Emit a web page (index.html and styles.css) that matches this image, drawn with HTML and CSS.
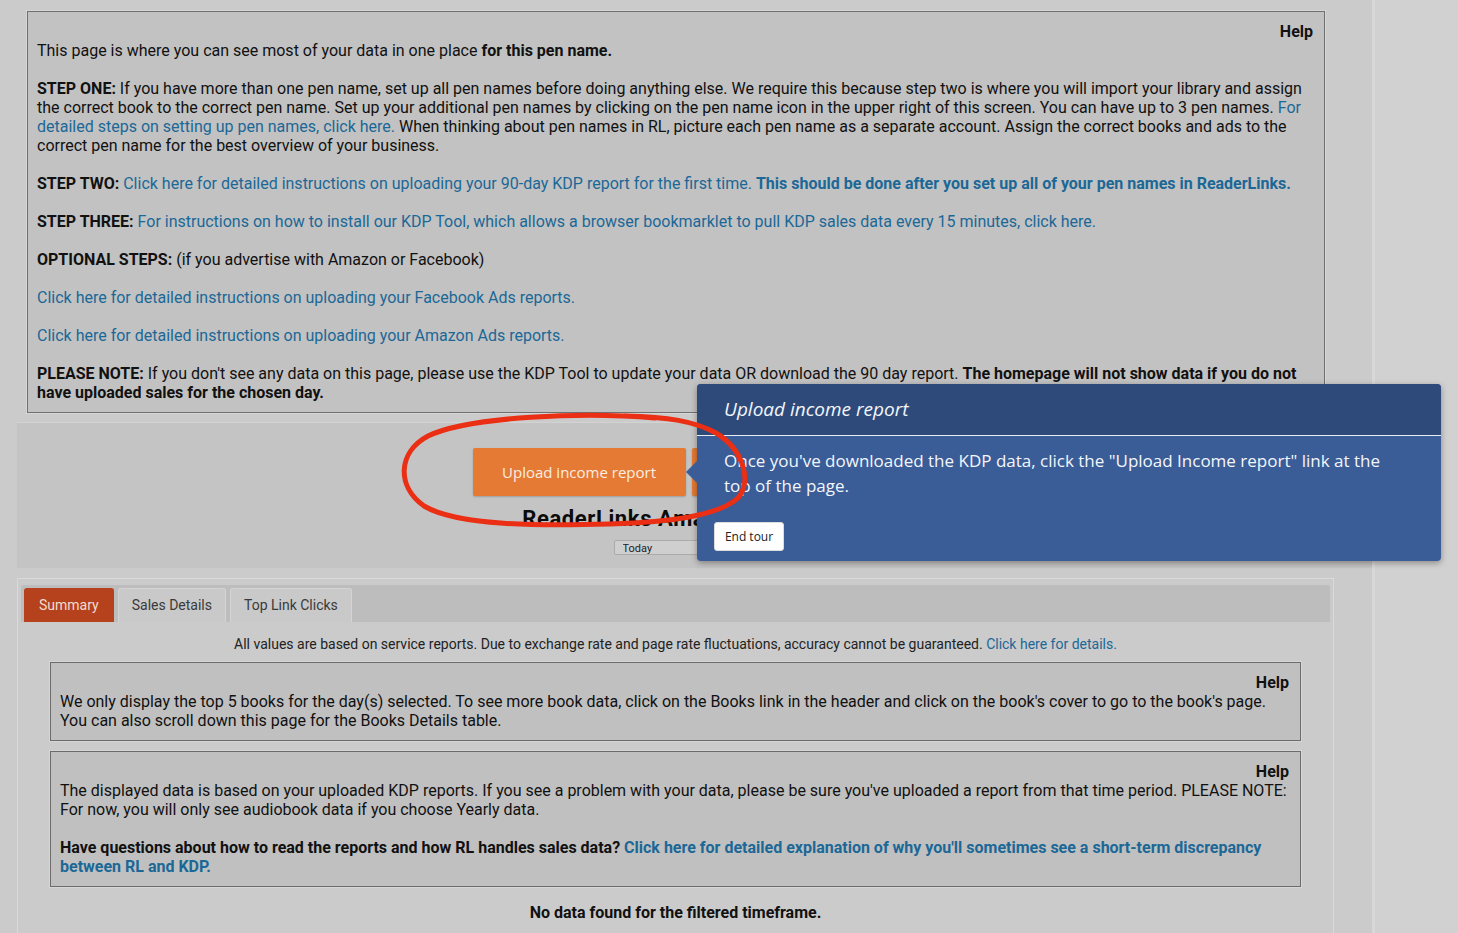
FILE: index.html
```html
<!DOCTYPE html>
<html>
<head>
    <title>ReaderLinks - Dashboard</title>
    <link rel="stylesheet" href="styles.css">
</head>
<body>
<div class="page">
    <div class="main">
        <div class="help-box top-help">
            <div class="help-label">Help</div>
            <p>This page is where you can see most of your data in one place <strong>for this pen name.</strong></p>
            <p><strong>STEP ONE:</strong> If you have more than one pen name, set up all pen names before doing anything else. We require this because step two is where you will import your library and assign the correct book to the correct pen name. Set up your additional pen names by clicking on the pen name icon in the upper right of this screen. You can have up to 3 pen names. <a href="#">For detailed steps on setting up pen names, click here.</a> When thinking about pen names in RL, picture each pen name as a separate account. Assign the correct books and ads to the correct pen name for the best overview of your business.</p>
            <p><strong>STEP TWO:</strong> <a href="#">Click here for detailed instructions on uploading your 90-day KDP report for the first time. <strong>This should be done after you set up all of your pen names in ReaderLinks.</strong></a></p>
            <p><strong>STEP THREE:</strong> <a href="#">For instructions on how to install our KDP Tool, which allows a browser bookmarklet to pull KDP sales data every 15 minutes, click here.</a></p>
            <p><strong>OPTIONAL STEPS:</strong> (if you advertise with Amazon or Facebook)</p>
            <p><a href="#">Click here for detailed instructions on uploading your Facebook Ads reports.</a></p>
            <p><a href="#">Click here for detailed instructions on uploading your Amazon Ads reports.</a></p>
            <p><strong>PLEASE NOTE:</strong> If you don't see any data on this page, please use the KDP Tool to update your data OR download the 90 day report. <strong>The homepage will not show data if you do not have uploaded sales for the chosen day.</strong></p>
        </div>

        <div class="upload-area">
            <div class="upload-buttons">
                <button class="btn-orange">Upload income report</button>
                <button class="btn-orange wide">Upload ads report</button>
            </div>
            <h2 class="dash-title">ReaderLinks Amazon Sales Stats</h2>
            <select class="range-select">
                <option>Today</option>
            </select>
        </div>

        <div class="tab-panel">
            <div class="tab-bar">
                <span class="tab active">Summary</span>
                <span class="tab">Sales Details</span>
                <span class="tab">Top Link Clicks</span>
            </div>
            <p class="notice">All values are based on service reports. Due to exchange rate and page rate fluctuations, accuracy cannot be guaranteed. <a href="#">Click here for details.</a></p>
            <div class="help-box inner-help">
                <div class="help-label">Help</div>
                <p>We only display the top 5 books for the day(s) selected. To see more book data, click on the Books link in the header and click on the book's cover to go to the book's page. You can also scroll down this page for the Books Details table.</p>
            </div>
            <div class="help-box inner-help">
                <div class="help-label">Help</div>
                <p>The displayed data is based on your uploaded KDP reports. If you see a problem with your data, please be sure you've uploaded a report from that time period. PLEASE NOTE: For now, you will only see audiobook data if you choose Yearly data.</p>
                <p><strong>Have questions about how to read the reports and how RL handles sales data? <a href="#">Click here for detailed explanation of why you'll sometimes see a short-term discrepancy between RL and KDP.</a></strong></p>
            </div>
            <p class="no-data">No data found for the filtered timeframe.</p>
        </div>
    </div>
    <div class="side"></div>

    <!-- tour popover -->
    <div class="tour">
        <div class="tour-arrow"></div>
        <div class="tour-title">Upload income report</div>
        <div class="tour-body">
            <p>Once you've downloaded the KDP data, click the "Upload Income report" link at the top of the page.</p>
            <button class="tour-end">End tour</button>
        </div>
    </div>

    <!-- hand drawn marker loop -->
    <svg class="marker" width="1458" height="933" viewBox="0 0 1458 933">
        <path d="M655 418 C585 412 470 416 428 436 C398 452 396 486 424 506 C458 526 540 526 610 524 C670 522 718 516 738 498 C752 482 744 450 716 433 C694 421 668 417 625 416" fill="none" stroke="#ea2f14" stroke-width="5" stroke-linecap="round"/>
    </svg>
</div>
</body>
</html>
```

FILE: styles.css
```css
body {
    margin: 0;
    padding: 0;
    background-color: #cbcbcb;
    font-family: 'Roboto', 'Liberation Sans', sans-serif;
    font-size: 16px;
    line-height: 19px;
    color: #111;
}
a {
    color: #1b6897;
    text-decoration: none;
}
.page {
    position: relative;
    display: flex;
    height: 933px;
    overflow: hidden;
}
.main {
    width: 1372px;
    flex: none;
}
.side {
    flex: 1;
    background-color: #d1d1d1;
    border-left: 3px solid #d8d8d8;
}

/* help boxes */
.help-box {
    background-color: #c2c2c2;
    border: 1px solid #707070;
    box-shadow: 0 0 0 1px #d6d6d6;
    padding: 10px 11px 10px 9px;
}
.help-box p {
    margin: 19px 0 0;
}
.help-box .help-label + p {
    margin-top: 0;
}
.help-label {
    text-align: right;
    font-weight: bold;
}
.top-help {
    margin: 11px 0 0 27px;
    width: 1276px;
}

/* upload */
.upload-area {
    margin: 10px 0 0 17px;
    height: 145px;
    background-color: #c4c4c4;
    box-shadow: 0 -1px 0 #d3d3d3;
    display: flex;
    flex-direction: column;
    align-items: center;
}
.upload-buttons {
    display: flex;
    gap: 6px;
    margin-top: 25px;
}
.btn-orange {
    width: 213px;
    height: 48px;
    border: none;
    border-radius: 2px;
    background-color: #e57a35;
    color: #fbeee2;
    font-family: 'Open Sans', sans-serif;
    font-size: 15px;
    box-shadow: 0 1px 2px rgba(0,0,0,0.2);
}
.btn-orange.wide {
    width: 225px;
}
.dash-title {
    margin: 11px 0 0;
    font-size: 22px;
    line-height: 24px;
    letter-spacing: 0.6px;
    font-weight: bold;
    color: #0b0b0b;
}
.range-select {
    margin-top: 9px;
    width: 162px;
    height: 15px;
    font-size: 11px;
    padding: 0 0 0 4px;
    border: 1px solid #ababab;
    border-radius: 2px;
    background-color: #cfcfcf;
    color: #222;
    font-family: 'Roboto', sans-serif;
}

/* tabs */
.tab-panel {
    margin: 10px 0 0 17px;
    width: 1309px;
    border: 1px solid #dadada;
    border-bottom: none;
    padding: 6px 3px 0;
    height: 400px;
}
.tab-bar {
    display: flex;
    gap: 4px;
    background-color: #bdbdbd;
    padding: 3px 3px 0;
    border-radius: 2px 2px 0 0;
}
.tab {
    display: block;
    padding: 7px 13px;
    font-size: 14px;
    color: #3a3a3a;
    background-color: #c9c9c9;
    border: 1px solid #d4d4d4;
    border-bottom: none;
    border-radius: 3px 3px 0 0;
}
.tab.active {
    padding: 7px 14px;
    background-color: #b5411d;
    border-color: #b5411d;
    color: #f1ddd0;
}
.notice {
    margin: 13px 0 0;
    text-align: center;
    font-size: 14px;
    color: #222;
}
.inner-help {
    margin: 8px 0 0 29px;
    width: 1229px;
    background-color: #c0c0c0;
    border-color: #6b6b6b;
}
.inner-help + .inner-help {
    margin-top: 10px;
}
.no-data {
    margin: 16px 0 0;
    text-align: center;
    font-weight: bold;
}

/* tour popover */
.tour {
    position: absolute;
    left: 697px;
    top: 384px;
    width: 744px;
    height: 177px;
    background-color: #3a5c97;
    border-radius: 4px;
    box-shadow: 0 2px 6px rgba(0,0,0,0.35);
    font-family: 'Open Sans', sans-serif;
    color: #f3f6fb;
}
.tour-arrow {
    position: absolute;
    left: -11px;
    top: 77px;
    width: 0;
    height: 0;
    border-top: 11px solid transparent;
    border-bottom: 11px solid transparent;
    border-right: 11px solid #3a5c97;
}
.tour-title {
    height: 51px;
    line-height: 51px;
    padding-left: 27px;
    font-size: 19px;
    font-style: italic;
    background-color: #2e4a7a;
    border-bottom: 1px solid #e8edf5;
    border-radius: 4px 4px 0 0;
}
.tour-body {
    padding: 12px 17px 0;
}
.tour-body p {
    margin: 0;
    padding: 0 30px 0 10px;
    font-size: 17px;
    line-height: 25px;
}
.tour-end {
    margin-top: 24px;
    height: 29px;
    width: 70px;
    background-color: #fff;
    border: 1px solid #ddd;
    border-radius: 3px;
    font-family: 'Open Sans', sans-serif;
    font-size: 12px;
    color: #222;
}

.marker {
    position: absolute;
    left: 0;
    top: 0;
    pointer-events: none;
}
```
